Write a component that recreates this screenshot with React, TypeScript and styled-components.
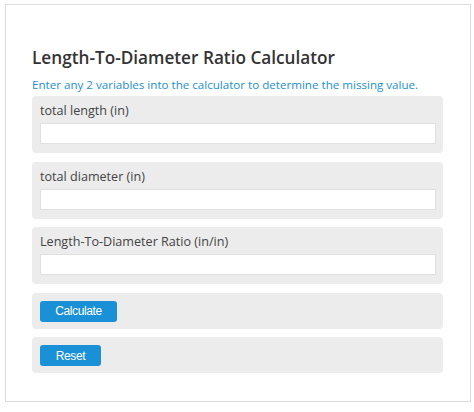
import React from "react";
import styled, { createGlobalStyle } from "styled-components";

const Global = createGlobalStyle`
  html, body { margin: 0; padding: 0; background: #ffffff; }
  body { font-family: "Open Sans", "Liberation Sans", sans-serif; }
  * { box-sizing: border-box; }
`;

const Card = styled.div`
  margin: 4px 0 0 5px;
  width: 466px;
  height: 398px;
  border: 1px solid #dcdcdc;
  background: #fff;
  padding: 41px 27px 0 26px;
`;

const Title = styled.h2`
  margin: 0;
  font-family: "Open Sans", sans-serif;
  font-weight: 600;
  font-size: 17.2px;
  line-height: 24px;
  color: #333;
`;

const Subtitle = styled.p`
  margin: 6px 0 2px 0;
  font-size: 11.6px;
  line-height: 18px;
  color: #1e8fd0;
  white-space: nowrap;
`;

const Stack = styled.div`
  display: flex;
  flex-direction: column;
  gap: 8.5px;
`;

const Section = styled.div<{ $h: number }>`
  background: #ececec;
  border-radius: 4px;
  height: ${(p) => p.$h}px;
  padding: ${(p) => (p.$h > 40 ? "6px 7px 0 8px" : "8px 7px 0 8px")};
  display: flex;
  flex-direction: column;
  align-items: flex-start;
`;

const Label = styled.label`
  font-size: 12.6px;
  line-height: 17px;
  color: #444;
  margin-bottom: 4px;
`;

const Input = styled.input`
  width: 100%;
  height: 21px;
  border: 1px solid #e0e0e0;
  background: #fff;
  outline: none;
  padding: 0 4px;
`;

const Button = styled.button<{ $w: number }>`
  width: ${(p) => p.$w}px;
  height: 21px;
  border: none;
  border-radius: 3px;
  background: #1a90d6;
  color: #fff;
  font-family: "Liberation Sans", Arial, sans-serif;
  font-size: 12px;
  letter-spacing: -0.4px;
  padding: 0;
  cursor: pointer;
`;

const fields = [
  "total length (in)",
  "total diameter (in)",
  "Length-To-Diameter Ratio (in/in)",
];

export default function App() {
  return (
    <>
      <Global />
      <Card>
        <Title>Length-To-Diameter Ratio Calculator</Title>
        <Subtitle>
          Enter any 2 variables into the calculator to determine the missing value.
        </Subtitle>
        <Stack>
          {fields.map((f) => (
            <Section key={f} $h={57}>
              <Label>{f}</Label>
              <Input type="text" />
            </Section>
          ))}
          <Section $h={36}>
            <Button $w={77}>Calculate</Button>
          </Section>
          <Section $h={36}>
            <Button $w={61}>Reset</Button>
          </Section>
        </Stack>
      </Card>
    </>
  );
}
